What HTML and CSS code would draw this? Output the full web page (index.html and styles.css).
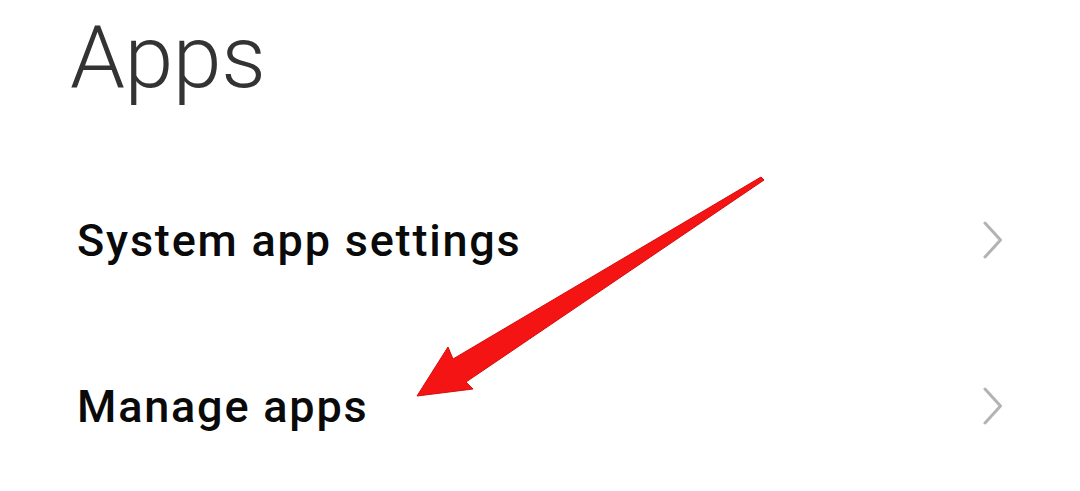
FILE: index.html
```html
<!DOCTYPE html>
<html lang="en">
<head>
<meta charset="utf-8">
<title>Apps</title>
<link rel="stylesheet" href="styles.css">
</head>
<body>
<div class="page">
  <h1 class="title">Apps</h1>
  <ul class="list">
    <li class="row">
      <span class="label">System app settings</span>
      <svg class="chev" width="20" height="38" viewBox="0 0 20 38"><polyline points="2,2 17.5,19 2,36" fill="none" stroke="#b3b3b3" stroke-width="3" stroke-linecap="round" stroke-linejoin="round"/></svg>
    </li>
    <li class="row">
      <span class="label">Manage apps</span>
      <svg class="chev" width="20" height="38" viewBox="0 0 20 38"><polyline points="2,2 17.5,19 2,36" fill="none" stroke="#b3b3b3" stroke-width="3" stroke-linecap="round" stroke-linejoin="round"/></svg>
    </li>
  </ul>
  <svg class="arrow" width="1080" height="491" viewBox="0 0 1080 491">
    <polygon points="417,396 448,347 453,359 761,177 764,180 466,382 473,389" fill="#f41414" stroke="#d80c0c" stroke-width="1" stroke-linejoin="round"/>
  </svg>
</div>
</body>
</html>
```

FILE: styles.css
```css
html, body {
  margin: 0;
  padding: 0;
  background: #ffffff;
}
.page {
  position: relative;
  width: 1080px;
  height: 491px;
  overflow: hidden;
  font-family: Roboto, "Liberation Sans", sans-serif;
}
.title {
  margin: 0;
  padding: 5px 0 0 70px;
  height: 157px;
  box-sizing: border-box;
  font-size: 88px;
  font-weight: 300;
  line-height: 104px;
  color: #333333;
  letter-spacing: -0.5px;
}
.list {
  list-style: none;
  margin: 0;
  padding: 0;
}
.row {
  display: flex;
  align-items: center;
  justify-content: space-between;
  height: 166px;
  padding: 0 77px 0 77px;
}
.label {
  font-size: 45px;
  font-weight: 500;
  letter-spacing: 1.8px;
  color: #0a0a0a;
}
.chev {
  display: block;
}
.arrow {
  position: absolute;
  left: 0;
  top: 0;
  pointer-events: none;
}
```
